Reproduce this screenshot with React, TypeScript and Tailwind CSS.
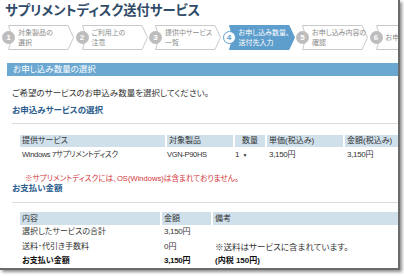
const FONT = "font-['Liberation_Sans','Noto_Sans_CJK_JP',sans-serif] [font-feature-settings:'palt']";

const steps: string[][] = [
  ['対象製品の', '選択'],
  ['ご利用上の', '注意'],
  ['提供中サービス', '一覧'],
  ['お申し込み数量、', '送付先入力'],
  ['お申し込み内容の', '確認'],
  ['お申し込み完了'],
];

function Step({ n, lines, active }: { n: number; lines: string[]; active: boolean }) {
  return (
    <div className="relative h-[25px] w-[73.5px] shrink-0">
      <svg className="absolute left-[6px] top-0 h-[25px] w-[66px]" viewBox="0 0 66 25">
        <polygon
          points="0.5,0.5 60,0.5 65.5,12.5 60,24.5 0.5,24.5 4,12.5"
          fill={active ? '#5e9ecd' : '#ffffff'}
          stroke={active ? '#5e9ecd' : '#c9c9c9'}
        />
      </svg>
      <div
        className={
          active
            ? 'absolute left-0 top-[6px] flex h-[13px] w-[13px] items-center justify-center rounded-full border border-[#5e9ecd] bg-white text-[8px] font-bold text-[#5e9ecd]'
            : 'absolute left-0 top-[6px] flex h-[13px] w-[13px] items-center justify-center rounded-full bg-[#bdbdbd] text-[8px] font-bold text-white'
        }
      >
        {n}
      </div>
      <div
        className={`relative flex h-[25px] flex-col justify-center whitespace-nowrap pl-[16px] text-[7px] leading-[10px] ${
          active ? 'text-white' : 'text-[#8a8a8a]'
        }`}
      >
        {lines.map((l) => (
          <div key={l}>{l}</div>
        ))}
      </div>
    </div>
  );
}

export default function App() {
  return (
    <div className={`h-[276px] w-[404px] bg-white ${FONT}`}>
      <div className="h-[270px] w-[400px] overflow-hidden border-b-2 border-r-2 border-[#6b6b6b] shadow-[2px_2px_3px_rgba(0,0,0,0.45)]">
        <h1 className="h-[22px] whitespace-nowrap pl-[5px] text-[13.3px] font-bold leading-[22px] text-[#2f4b68]">
          サプリメントディスク送付サービス
        </h1>

        <div className="mt-[3px] flex pl-[2px]">
          {steps.map((s, i) => (
            <Step key={i} n={i + 1} lines={s} active={i === 3} />
          ))}
        </div>

        <div className="ml-[7px] mt-[13px] h-[13px] bg-[#6aa7d1] pl-[6px] text-[8.5px] leading-[13px] text-white">
          お申し込み数量の選択
        </div>

        <p className="ml-[12px] mt-[11px] text-[8.5px] leading-[12px] text-[#333]">
          ご希望のサービスのお申込み数量を選択してください。
        </p>

        <div className="ml-[12px] mt-[5px] border-b border-[#dcdcdc] pb-[7px] text-[8.5px] font-bold leading-[12px] text-[#2c5d8c]">
          お申込みサービスの選択
        </div>

        <div className="ml-[20px] mt-[11px] text-[8px] text-[#333]">
          <div className="flex h-[12px] bg-[#cfe0eb] leading-[12px]">
            <div className="w-[145px] pl-[2px]">提供サービス</div>
            <div className="w-[68px] border-l-2 border-white pl-[2px]">対象製品</div>
            <div className="w-[32px] border-l-2 border-white text-center">数量</div>
            <div className="w-[78px] border-l-2 border-white pl-[2px]">単価(税込み)</div>
            <div className="flex-1 border-l-2 border-white pl-[2px]">金額(税込み)</div>
          </div>
          <div className="flex h-[15px] items-center leading-[12px]">
            <div className="w-[145px] pl-[2px] text-[7.5px] tracking-[-0.3px]">Windows 7サプリメントディスク</div>
            <div className="w-[68px] pl-[2px] text-[7.5px] tracking-[-0.3px]">VGN-P90HS</div>
            <div className="flex w-[32px] items-center gap-[3px] pl-[2px]">
              <span>1</span>
              <span className="text-[5px]">▼</span>
            </div>
            <div className="w-[78px] pl-[4px] tracking-[-0.3px]">3,150円</div>
            <div className="flex-1 pl-[4px] tracking-[-0.3px]">3,150円</div>
          </div>
        </div>

        <p className="ml-[25px] mt-[13px] whitespace-nowrap text-[7.6px] leading-[8px] text-[#d2363b]">
          ※サプリメントディスクには、OS(Windows)は含まれておりません。
        </p>

        <div className="ml-[12px] border-b border-[#dcdcdc] pb-[9px] text-[8.5px] font-bold leading-[10px] text-[#2c5d8c]">
          お支払い金額
        </div>

        <div className="ml-[20px] mt-[9px] text-[8px] text-[#333]">
          <div className="flex h-[13px] bg-[#cfe0eb] leading-[13px]">
            <div className="w-[140px] pl-[2px]">内容</div>
            <div className="w-[51px] border-l-2 border-white pl-[2px]">金額</div>
            <div className="flex-1 border-l-2 border-white pl-[2px]">備考</div>
          </div>
          <div className="flex h-[14px] items-center leading-[12px]">
            <div className="w-[140px] pl-[2px]">選択したサービスの合計</div>
            <div className="w-[51px] pl-[4px] tracking-[-0.3px]">3,150円</div>
            <div className="flex-1 pl-[4px]"></div>
          </div>
          <div className="flex h-[15px] items-center leading-[12px]">
            <div className="w-[140px] pl-[2px]">送料･代引き手数料</div>
            <div className="w-[51px] pl-[4px]">0円</div>
            <div className="flex-1 pl-[4px] text-[8.5px]">※送料はサービスに含まれています。</div>
          </div>
          <div className="flex h-[14px] items-center font-bold leading-[12px] text-[#111]">
            <div className="w-[140px] pl-[2px]">お支払い金額</div>
            <div className="w-[51px] pl-[4px] tracking-[-0.3px]">3,150円</div>
            <div className="flex-1 pl-[4px]">(内税 150円)</div>
          </div>
        </div>
      </div>
    </div>
  );
}
